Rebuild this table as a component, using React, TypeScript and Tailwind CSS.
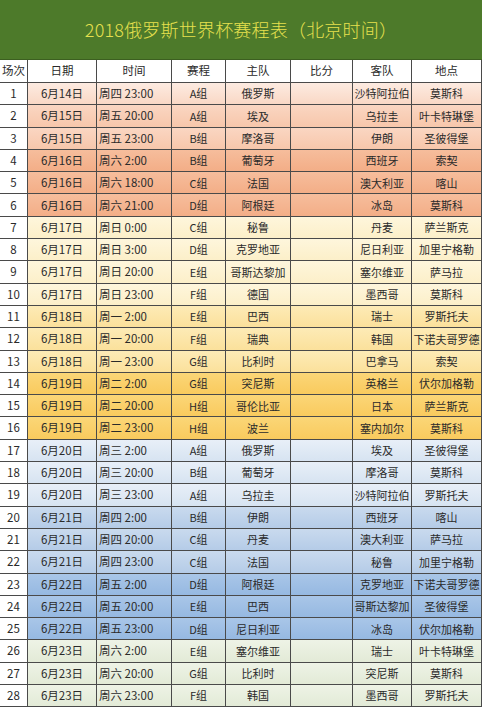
import React from "react";

type Match = [string, string, string, string, string, string];

// date, time, group, home, away, venue
const matches: Match[] = [
  ["6月14日", "周四 23:00", "A组", "俄罗斯", "沙特阿拉伯", "莫斯科"],
  ["6月15日", "周五 20:00", "A组", "埃及", "乌拉圭", "叶卡特琳堡"],
  ["6月15日", "周五 23:00", "B组", "摩洛哥", "伊朗", "圣彼得堡"],
  ["6月16日", "周六 2:00", "B组", "葡萄牙", "西班牙", "索契"],
  ["6月16日", "周六 18:00", "C组", "法国", "澳大利亚", "喀山"],
  ["6月16日", "周六 21:00", "D组", "阿根廷", "冰岛", "莫斯科"],
  ["6月17日", "周日 0:00", "C组", "秘鲁", "丹麦", "萨兰斯克"],
  ["6月17日", "周日 3:00", "D组", "克罗地亚", "尼日利亚", "加里宁格勒"],
  ["6月17日", "周日 20:00", "E组", "哥斯达黎加", "塞尔维亚", "萨马拉"],
  ["6月17日", "周日 23:00", "F组", "德国", "墨西哥", "莫斯科"],
  ["6月18日", "周一 2:00", "E组", "巴西", "瑞士", "罗斯托夫"],
  ["6月18日", "周一 20:00", "F组", "瑞典", "韩国", "下诺夫哥罗德"],
  ["6月18日", "周一 23:00", "G组", "比利时", "巴拿马", "索契"],
  ["6月19日", "周二 2:00", "G组", "突尼斯", "英格兰", "伏尔加格勒"],
  ["6月19日", "周二 20:00", "H组", "哥伦比亚", "日本", "萨兰斯克"],
  ["6月19日", "周二 23:00", "H组", "波兰", "塞内加尔", "莫斯科"],
  ["6月20日", "周三 2:00", "A组", "俄罗斯", "埃及", "圣彼得堡"],
  ["6月20日", "周三 20:00", "B组", "葡萄牙", "摩洛哥", "莫斯科"],
  ["6月20日", "周三 23:00", "A组", "乌拉圭", "沙特阿拉伯", "罗斯托夫"],
  ["6月21日", "周四 2:00", "B组", "伊朗", "西班牙", "喀山"],
  ["6月21日", "周四 20:00", "C组", "丹麦", "澳大利亚", "萨马拉"],
  ["6月21日", "周四 23:00", "C组", "法国", "秘鲁", "加里宁格勒"],
  ["6月22日", "周五 2:00", "D组", "阿根廷", "克罗地亚", "下诺夫哥罗德"],
  ["6月22日", "周五 20:00", "E组", "巴西", "哥斯达黎加", "圣彼得堡"],
  ["6月22日", "周五 23:00", "D组", "尼日利亚", "冰岛", "伏尔加格勒"],
  ["6月23日", "周六 2:00", "E组", "塞尔维亚", "瑞士", "叶卡特琳堡"],
  ["6月23日", "周六 20:00", "G组", "比利时", "突尼斯", "莫斯科"],
  ["6月23日", "周六 23:00", "F组", "韩国", "墨西哥", "罗斯托夫"],
];

// row fill, banded in groups like the spreadsheet
const rowBg = (i: number) => {
  if (i < 1) return "bg-gradient-to-b from-[#fdebe1] to-[#f9d7c4]";
  if (i < 3) return "bg-gradient-to-b from-[#fad6c2] to-[#f7c6aa]";
  if (i < 6) return "bg-gradient-to-b from-[#f6bd9c] to-[#f3ad86]";
  if (i < 10) return "bg-gradient-to-b from-[#fef6dc] to-[#fcefc8]";
  if (i < 13) return "bg-gradient-to-b from-[#fdebb6] to-[#fbe09a]";
  if (i < 16) return "bg-gradient-to-b from-[#fbd677] to-[#f9ca5c]";
  if (i < 19) return "bg-gradient-to-b from-[#e8eff8] to-[#d6e3f1]";
  if (i < 22) return "bg-gradient-to-b from-[#c9daee] to-[#b4cbe7]";
  if (i < 25) return "bg-gradient-to-b from-[#a9c6e8] to-[#95b8e1]";
  return "bg-gradient-to-b from-[#eef3e6] to-[#e2ead6]";
};

const cols = "grid grid-cols-[28px_69px_75px_54px_65px_62px_59px_70px]";
const cell = "flex items-center justify-center border-r border-b border-[#4a4a4a] whitespace-nowrap overflow-hidden";

export default function App() {
  return (
    <div
      className="w-[482px] bg-white text-[#2a2a2a] text-[11px]"
      style={{ fontFamily: '"Noto Sans CJK SC", "Noto Sans", sans-serif' }}
    >
      <div className="h-[60px] bg-[#4d7a2a] flex items-center justify-center border-b border-[#3c5f20]">
        <h1 className="text-[18px] font-light text-[#e6e04e] tracking-[0.2px]">2018俄罗斯世界杯赛程表（北京时间）</h1>
      </div>

      <div className={`${cols} h-[23px] bg-white text-[11.5px]`}>
        {["场次", "日期", "时间", "赛程", "主队", "比分", "客队", "地点"].map((h) => (
          <div key={h} className={cell}>{h}</div>
        ))}
      </div>

      {matches.map((m, i) => (
        <div key={i} className={`${cols} h-[22.3px]`}>
          <div className={`${cell} bg-white text-[11.5px]`}>{i + 1}</div>
          <div className={`col-span-7 ${rowBg(i)} grid grid-cols-[69px_75px_54px_65px_62px_59px_70px]`}>
            <div className={`${cell} text-[11.5px]`}>{m[0]}</div>
            <div className={`${cell} !justify-start pl-[2px] text-[11.5px]`}>{m[1]}</div>
            <div className={cell}>{m[2]}</div>
            <div className={cell}>{m[3]}</div>
            <div className={cell}></div>
            <div className={cell}>{m[4]}</div>
            <div className={cell}>{m[5]}</div>
          </div>
        </div>
      ))}
    </div>
  );
}
